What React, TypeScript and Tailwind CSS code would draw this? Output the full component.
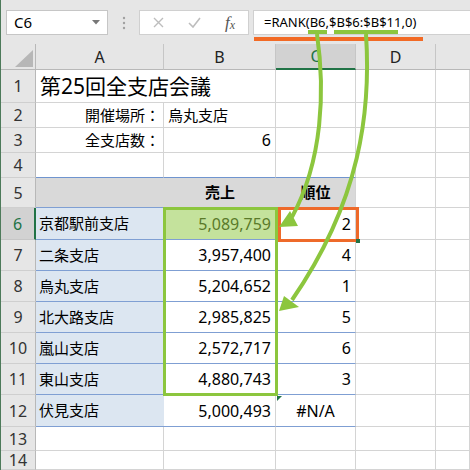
import type { ReactNode } from 'react';

// 共通スタイル
const GRID = 'border-r border-b border-[#d4d4d4]';
const HEAD5 = 'bg-[#d9d9d9] border-b border-b-[#7f9fd3] justify-center font-bold';
const TBL_A = 'bg-[#dce6f1] border-b border-b-[#7f9fd3] justify-start pl-[3px]';
const TBL_NUM = 'border-r border-b border-r-[#d4d4d4] border-b-[#7f9fd3] justify-end pr-[4px] text-[16px]';

type CellDef = { cls: string; v?: ReactNode };

type RowDef = { n: number; h: string; sel?: boolean; cells: CellDef[] };

const blank = (): CellDef => ({ cls: GRID });

const branches: [string, string, string][] = [
  ['京都駅前支店', '5,089,759', '2'],
  ['二条支店', '3,957,400', '4'],
  ['烏丸支店', '5,204,652', '1'],
  ['北大路支店', '2,985,825', '5'],
  ['嵐山支店', '2,572,717', '6'],
  ['東山支店', '4,880,743', '3'],
  ['伏見支店', '5,000,493', '#N/A'],
];

const branchHeights = ['h-[32px]', 'h-[31px]', 'h-[31px]', 'h-[31px]', 'h-[31px]', 'h-[31px]', 'h-[32px]'];

const rows: RowDef[] = [
  {
    n: 1,
    h: 'h-[33px]',
    cells: [
      {
        cls: 'border-b border-[#d4d4d4] pl-[4px] pt-[1px]',
        v: <span className="relative z-[1] text-[21px] leading-none">第25回全支店会議</span>,
      },
      blank(),
      blank(),
      blank(),
      blank(),
    ],
  },
  {
    n: 2,
    h: 'h-[25px]',
    cells: [
      { cls: `${GRID} justify-end pr-[3px]`, v: '開催場所：' },
      { cls: `${GRID} pl-[4px]`, v: '烏丸支店' },
      blank(),
      blank(),
      blank(),
    ],
  },
  {
    n: 3,
    h: 'h-[25px]',
    cells: [
      { cls: `${GRID} justify-end pr-[3px]`, v: '全支店数：' },
      { cls: `${GRID} justify-end pr-[4px] text-[16px]`, v: '6' },
      blank(),
      blank(),
      blank(),
    ],
  },
  {
    n: 4,
    h: 'h-[25px]',
    cells: [
      { cls: 'border-r border-b border-r-[#d4d4d4] border-b-[#6f94cf]' },
      { cls: 'border-r border-b border-r-[#d4d4d4] border-b-[#6f94cf]' },
      { cls: 'border-r border-b border-r-[#d4d4d4] border-b-[#6f94cf]' },
      blank(),
      blank(),
    ],
  },
  {
    n: 5,
    h: 'h-[30px]',
    cells: [
      { cls: HEAD5 },
      { cls: HEAD5, v: '売上' },
      { cls: `${HEAD5} border-r border-r-[#d4d4d4]`, v: '順位' },
      blank(),
      blank(),
    ],
  },
  ...branches.map(([name, sales, rank], i) => ({
    n: 6 + i,
    h: branchHeights[i],
    sel: i === 0,
    cells: [
      { cls: TBL_A, v: name },
      {
        cls: i === 0 ? `${TBL_NUM} bg-[#c4e29c] text-[#5a7a2a]` : TBL_NUM,
        v: sales,
      },
      {
        cls: rank === '#N/A'
          ? 'border-r border-b border-r-[#d4d4d4] border-b-[#7f9fd3] justify-center text-[16px]'
          : TBL_NUM,
        v: rank,
      },
      blank(),
      blank(),
    ],
  })),
  { n: 13, h: 'h-[24px]', cells: [blank(), blank(), blank(), blank(), blank()] },
  { n: 14, h: 'h-[19px]', cells: [blank(), blank(), blank(), blank(), blank()] },
];

function SheetRow({ row }: { row: RowDef }) {
  return (
    <div className={`grid grid-cols-[35px_128px_112px_80px_80px_1fr] ${row.h}`}>
      <div
        className={
          row.sel
            ? 'flex items-center justify-center bg-[#d2d2d2] border-b border-b-[#c6c6c6] border-r-2 border-r-[#217346] text-[#217346] text-[16px] leading-none'
            : 'flex items-center justify-center bg-[#e6e6e6] border-b border-r border-b-[#cfcfcf] border-r-[#b8b8b8] text-[#333] text-[16px] leading-none'
        }
      >
        {row.n}
      </div>
      {row.cells.map((c, i) => (
        <div key={i} className={`flex items-center min-w-0 whitespace-nowrap ${c.cls}`}>
          {c.v}
        </div>
      ))}
    </div>
  );
}

function ColumnHeader() {
  const letters = ['A', 'B', 'C', 'D'];
  return (
    <div className="grid grid-cols-[35px_128px_112px_80px_80px_1fr] h-[26px] bg-[#e6e6e6] text-[16px] text-[#222]">
      <div className="relative border-r border-b border-[#b8b8b8]">
        <svg className="absolute inset-0" width="35" height="26" viewBox="0 0 35 26">
          <polygon points="14,23 32,23 32,6" fill="#b7b7b7" />
        </svg>
      </div>
      {letters.map((l) =>
        l === 'C' ? (
          <div
            key={l}
            className="flex items-center justify-center bg-[#d2d2d2] border-r border-r-[#c6c6c6] border-b-2 border-b-[#217346] text-[#217346]"
          >
            {l}
          </div>
        ) : (
          <div key={l} className="flex items-center justify-center border-r border-b border-r-[#c6c6c6] border-b-[#b8b8b8]">
            {l}
          </div>
        )
      )}
      <div className="border-b border-[#b8b8b8]" />
    </div>
  );
}

function FormulaBar() {
  return (
    <div className="h-[44px] flex items-start pt-[10px] bg-[#e6e6e6]">
      <div className="ml-[5px] w-[102px] h-[25px] bg-white border border-[#c6c6c6] flex items-center justify-between pl-[7px] pr-[7px] text-[15px]">
        <span>C6</span>
        <svg width="8" height="5" viewBox="0 0 8 5">
          <polygon points="0,0 8,0 4,4.5" fill="#777" />
        </svg>
      </div>
      <div className="w-[31px] h-[25px] flex items-center justify-center">
        <svg width="4" height="14" viewBox="0 0 4 14">
          <circle cx="2" cy="2" r="1.2" fill="#a0a0a0" />
          <circle cx="2" cy="7" r="1.2" fill="#a0a0a0" />
          <circle cx="2" cy="12" r="1.2" fill="#a0a0a0" />
        </svg>
      </div>
      <div className="w-[110px] h-[25px] bg-white border border-[#d0d0d0] grid grid-cols-3 items-center">
        <div className="flex justify-center">
          <svg width="11" height="11" viewBox="0 0 11 11">
            <path d="M1 1 L10 10 M10 1 L1 10" stroke="#bdbdbd" strokeWidth="1.4" />
          </svg>
        </div>
        <div className="flex justify-center">
          <svg width="13" height="11" viewBox="0 0 13 11">
            <path d="M1 6 L5 10 L12 1" stroke="#bdbdbd" strokeWidth="1.6" fill="none" />
          </svg>
        </div>
        <div className="flex justify-center font-['Liberation_Serif',serif] italic text-[#555] leading-none">
          <span className="text-[17px]">f</span>
          <span className="text-[12px] mt-[5px]">x</span>
        </div>
      </div>
      <div className="ml-[4px] flex-1 h-[25px] bg-white border border-r-0 border-[#d0d0d0] flex items-center pl-[10px] text-[13px]">
        =RANK(B6,$B$6:$B$11,0)
      </div>
    </div>
  );
}

function Overlay() {
  return (
    <svg className="absolute inset-0 pointer-events-none z-10" width="470" height="470" viewBox="0 0 470 470">
      {/* 数式内の参照の下線 */}
      <rect x="307" y="30" width="19" height="4" fill="#8cc63e" />
      <rect x="333" y="30" width="64" height="4" fill="#8cc63e" />
      <rect x="253" y="37" width="169" height="4" fill="#f26a25" />
      {/* 範囲の枠 */}
      <rect x="163.5" y="208.5" width="112" height="186" fill="none" stroke="#8cc63e" strokeWidth="3" />
      <rect x="278.5" y="208.5" width="78" height="32" fill="none" stroke="#ee6a2a" strokeWidth="3" />
      <rect x="355" y="239" width="4" height="4" fill="#217346" />
      <polygon points="276,396 281,396 276,401" fill="#217346" />
      {/* 矢印 */}
      <path d="M316 34 C 324 90, 322 160, 291 217" stroke="#8cc63e" strokeWidth="4" fill="none" />
      <polygon points="278,227 289,211 297,226" fill="#8cc63e" />
      <path d="M365 34 C 370 110, 360 200, 291 300" stroke="#8cc63e" strokeWidth="4" fill="none" />
      <polygon points="278,311 283,296 298,307" fill="#8cc63e" />
    </svg>
  );
}

export default function App() {
  return (
    <div className="relative w-[470px] h-[470px] overflow-hidden bg-white border-l border-l-[#4d7a5a] font-['Noto_Sans','Noto_Sans_CJK_JP',sans-serif] text-[15px] text-black">
      <FormulaBar />
      <ColumnHeader />
      {rows.map((r) => (
        <SheetRow key={r.n} row={r} />
      ))}
      <Overlay />
    </div>
  );
}
